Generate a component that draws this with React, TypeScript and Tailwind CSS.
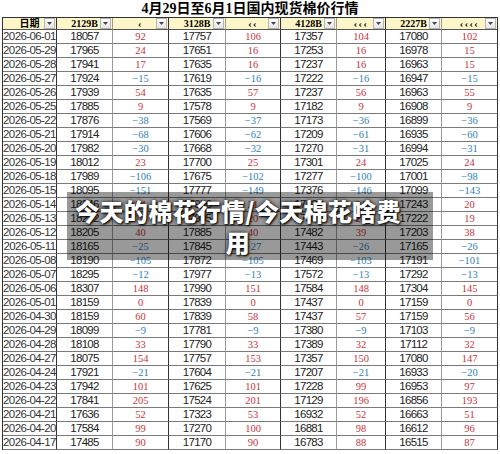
type Row = [string, number, number, number, number, number, number, number, number]

const rows: Row[] = [
  ["2026-06-01", 18057, 92, 17757, 106, 17357, 104, 17080, 102],
  ["2026-05-29", 17965, 24, 17651, 16, 17253, 16, 16978, 15],
  ["2026-05-28", 17941, 17, 17635, 16, 17237, 16, 16963, 15],
  ["2026-05-27", 17924, -15, 17619, -16, 17222, -16, 16947, -15],
  ["2026-05-26", 17939, 54, 17635, 57, 17237, 56, 16963, 55],
  ["2026-05-25", 17885, 9, 17578, 9, 17182, 9, 16908, 9],
  ["2026-05-22", 17876, -38, 17569, -37, 17173, -36, 16899, -36],
  ["2026-05-21", 17914, -68, 17606, -62, 17209, -61, 16935, -60],
  ["2026-05-20", 17982, -30, 17668, -32, 17270, -31, 16994, -31],
  ["2026-05-19", 18012, 23, 17700, 25, 17301, 24, 17025, 24],
  ["2026-05-18", 17989, -106, 17675, -102, 17277, -100, 17001, -98],
  ["2026-05-15", 18095, -151, 17777, -149, 17376, -146, 17099, -143],
  ["2026-05-14", 18246, 24, 17926, 21, 17523, 21, 17243, 20],
  ["2026-05-13", 18222, 17, 17905, 20, 17502, 20, 17222, 19],
  ["2026-05-12", 18205, 40, 17885, 40, 17482, 39, 17203, 38],
  ["2026-05-11", 18165, -25, 17845, -27, 17443, -26, 17165, -26],
  ["2026-05-08", 18190, -105, 17872, -105, 17469, -103, 17191, -101],
  ["2026-05-07", 18295, -12, 17977, -13, 17572, -13, 17292, -13],
  ["2026-05-06", 18307, 148, 17990, 151, 17584, 148, 17304, 145],
  ["2026-05-01", 18159, 0, 17839, 0, 17437, 0, 17159, 0],
  ["2026-04-30", 18159, 60, 17839, 58, 17437, 57, 17159, 56],
  ["2026-04-29", 18099, -9, 17781, -9, 17380, -9, 17103, -9],
  ["2026-04-28", 18108, 33, 17790, 33, 17389, 32, 17112, 32],
  ["2026-04-27", 18075, 154, 17757, 153, 17357, 150, 17080, 147],
  ["2026-04-24", 17921, -21, 17604, -21, 17207, -21, 16933, -20],
  ["2026-04-23", 17942, 101, 17625, 101, 17228, 99, 16953, 97],
  ["2026-04-22", 17841, 205, 17524, 201, 17129, 196, 16856, 193],
  ["2026-04-21", 17636, 52, 17323, 53, 16932, 52, 16663, 51],
  ["2026-04-20", 17584, 99, 17270, 100, 16881, 98, 16612, 96],
  ["2026-04-17", 17485, 90, 17170, 90, 16783, 88, 16515, 87],
]

const heads = ["日期", "2129B", "‹", "3128B", "‹‹", "4128B", "‹‹‹", "2227B", "‹‹‹‹"]

// dark lines close each price/diff pair, light ones sit inside it
const rightLine = [
  "border-r-[#333]",
  "border-r-[#9a9a9a]",
  "border-r-[#333]",
  "border-r-[#9a9a9a]",
  "border-r-[#333]",
  "border-r-[#9a9a9a]",
  "border-r-[#333]",
  "border-r-[#9a9a9a]",
  "border-r-[#333]",
]

const gridCols = "grid grid-cols-[54px_56px_56px_57px_55px_56px_49px_56px_56px]"

const FilterButton = () => (
  <span className="absolute right-[1px] top-0 flex h-[11px] w-[11px] items-center justify-center border border-[#b5b5b5] bg-gradient-to-b from-white to-[#e4e4e4]">
    <svg width="5" height="3" viewBox="0 0 5 3">
      <path d="M0 0h5L2.5 3z" fill="#444" />
    </svg>
  </span>
)

const Diff = ({ v }: { v: number }) => (
  <span className={`pt-[2px] font-['Liberation_Serif',serif] text-[10.5px] ${v < 0 ? "text-[#2f7fb8]" : "text-[#c4343c]"}`}>
    {v < 0 ? `−${Math.abs(v)}` : v}
  </span>
)

const Price = ({ v }: { v: number }) => (
  <span className="text-[11.5px] tracking-[-0.7px] text-[#222]">{v}</span>
)

export default function App() {
  return (
    <div className="relative h-[454px] w-[500px] overflow-hidden bg-white font-['Liberation_Sans',Arial,sans-serif]">
      <div className="flex h-[17px] items-end justify-center pb-[1px] font-['Liberation_Serif','Noto_Sans_CJK_SC',serif] text-[14px] font-bold leading-none text-black">
        4月29日至6月1日国内现货棉价行情
      </div>

      <div className="ml-[2px] w-[496px] border-l border-t border-l-[#333] border-t-[#333]">
        <div className={`${gridCols} bg-[#fdf6c8]`}>
          {heads.map((h, i) => (
            <div
              key={h}
              className={`relative flex h-[12px] items-center justify-center whitespace-nowrap border-b border-r border-b-[#555] ${rightLine[i]} font-['Liberation_Serif','Noto_Sans_CJK_SC',serif] text-[10px] font-bold leading-none ${i % 2 === 0 && i > 0 ? "tracking-[1.5px]" : ""}`}
            >
              {h}
              <FilterButton />
            </div>
          ))}
        </div>

        {rows.map((r) => (
          <div key={r[0]} className={gridCols}>
            {r.map((c, i) => (
              <div
                key={i}
                className={`flex h-[14px] items-center justify-center whitespace-nowrap border-b border-r border-b-[#7a7a7a] ${rightLine[i]} leading-none`}
              >
                {i === 0 ? (
                  <span className="text-[11.5px] tracking-[-0.6px] text-[#333]">{c}</span>
                ) : i % 2 === 1 ? (
                  <Price v={c as number} />
                ) : (
                  <Diff v={c as number} />
                )}
              </div>
            ))}
          </div>
        ))}
      </div>

      <div className="absolute left-[67px] top-[192px] h-[68px] w-[366px] bg-black/40 pl-[4px] pr-[28px] pt-[3px] text-center font-['Noto_Sans_CJK_SC',sans-serif] text-[24px] font-black leading-[31px] tracking-[0.3px] whitespace-nowrap text-white [text-shadow:0_0_4px_rgba(0,0,0,0.9),1px_1px_2px_#000]">
        今天的棉花行情/今天棉花啥费
        <br />
        用
      </div>
    </div>
  )
}
